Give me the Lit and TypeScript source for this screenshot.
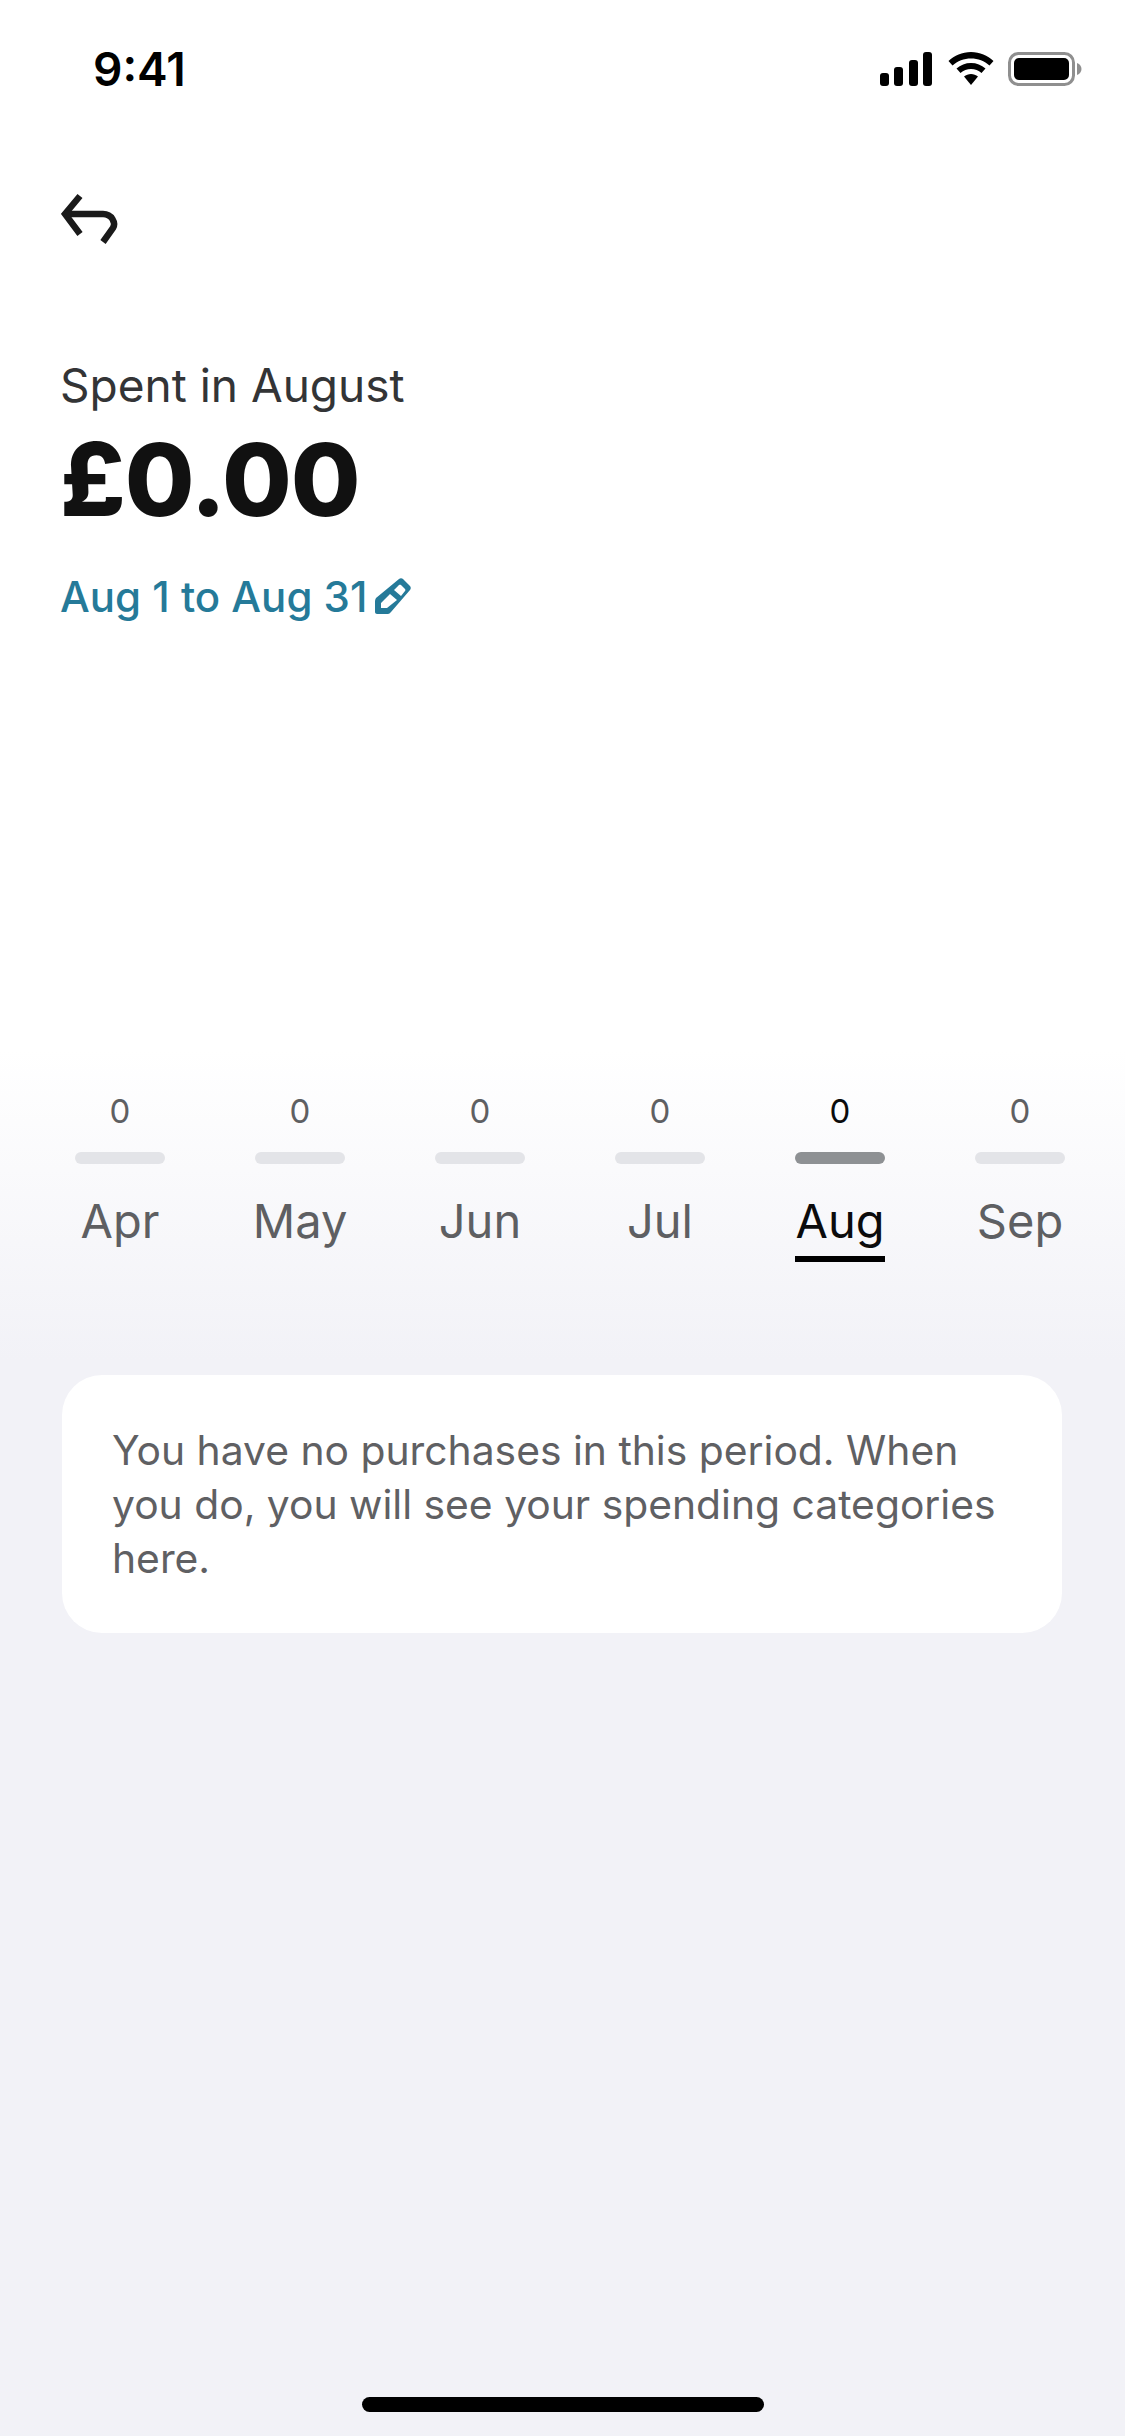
import { LitElement, html, css } from "lit";
import { customElement } from "lit/decorators.js";

const MONTHS = ["Apr", "May", "Jun", "Jul", "Aug", "Sep"];

@customElement("app-root")
export class AppRoot extends LitElement {
  static styles = css`
    :host { display: block; width: 1125px; height: 2436px; font-family: Inter, "Liberation Sans", sans-serif; background: #f2f2f7; overflow: hidden; }
    .page { height: 2436px; display: flex; flex-direction: column; background: linear-gradient(#ffffff 0, #ffffff 1050px, #f2f2f7 1360px); }
    .status { height: 136px; flex: none; display: flex; justify-content: space-between; align-items: flex-start; padding: 43px 43px 0 93px; box-sizing: border-box; }
    .time { font-size: 46px; line-height: 52px; font-weight: 600; color: #000; }
    .sys { display: flex; align-items: center; gap: 14px; padding: 9px 0 0 0; }
    .sys svg { display: block; }
    .nav { height: 88px; flex: none; padding: 57px 0 0 61px; box-sizing: border-box; }
    .nav svg { display: block; }
    .head { padding: 135px 60px 0; flex: none; height: 867px; box-sizing: border-box; }
    .label { font-size: 46px; line-height: 52px; color: #333436; }
    .amount { font-size: 101px; line-height: 124px; font-weight: 800; color: #111; margin-top: 6px; letter-spacing: -1px; }
    .range { display: flex; align-items: center; gap: 8px; font-size: 42px; line-height: 48px; font-weight: 450; color: #257a99; margin-top: 32px; }
    .months { display: grid; grid-template-columns: repeat(6, 180px); padding: 0 30px; flex: none; }
    .m { display: flex; flex-direction: column; align-items: center; color: #5e5f62; }
    .v { font-size: 33px; line-height: 40px; }
    .bar { width: 90px; height: 12px; border-radius: 6px; background: #e3e4e8; margin-top: 21px; }
    .n { font-size: 47px; line-height: 54px; margin-top: 30px; padding-bottom: 8px; width: 90px; text-align: center; white-space: nowrap; display: flex; justify-content: center; border-bottom: 6px solid transparent; }
    .m.on { color: #0b0b0c; }
    .m.on .bar { background: #8e9194; }
    .m.on .n { border-bottom-color: #000; }
    .card { margin: 113px 63px 0 62px; padding: 48px 50px; background: #fff; border-radius: 40px; font-size: 40.8px; line-height: 54px; color: #5f6063; flex: none; }
    .spacer { flex: 1; }
    .home { flex: none; display: flex; justify-content: center; padding-bottom: 24px; }
    .home i { display: block; width: 402px; height: 15px; border-radius: 8px; background: #000; }
  `;

  render() {
    return html`<div class="page">
      <div class="status">
        <div class="time">9:41</div>
        <div class="sys">
          <svg width="54" height="34" viewBox="0 0 54 34"><rect x="0" y="21" width="9" height="13" rx="3"/><rect x="14" y="15" width="9" height="19" rx="3"/><rect x="29" y="8" width="9" height="26" rx="3"/><rect x="43" y="0" width="9" height="34" rx="3"/></svg>
          <svg width="46" height="34" viewBox="0 0 46 34"><path d="M23 0C14 0 6.500 3.500 0.500 9L4.500 13.500C9.500 9 16 6.500 23 6.500S36.500 9 41.500 13.500L45.500 9C39.500 3.500 32 0 23 0Z"/><path d="M23 11C17.500 11 12.500 13 8.500 16.500L12.500 21C15.500 18.500 19 17 23 17S30.500 18.500 33.500 21L37.500 16.500C33.500 13 28.500 11 23 11Z"/><path d="M23 22C20.500 22 18 23 16 24.500L23 33L30 24.500C28 23 25.500 22 23 22Z"/></svg>
          <svg width="74" height="34" viewBox="0 0 74 34"><rect x="1.500" y="1.500" width="64" height="31" rx="9" fill="none" stroke="#8f8f8f" stroke-width="3"/><rect x="6" y="6" width="55" height="22" rx="5"/><path d="M69 11C72 12 73.500 14.500 73.500 17S72 22 69 23Z" fill="#8f8f8f"/></svg>
        </div>
      </div>
      <div class="nav">
        <svg width="60" height="52" viewBox="0 0 60 52" fill="none" stroke="#1a1a1a" stroke-width="6.500"><path d="M19 3L4 21L19 41"/><path d="M4 21H42C51 21 55 30 52 35L42 49"/></svg>
      </div>
      <div class="head">
        <div class="label">Spent in August</div>
        <div class="amount">£0.00</div>
        <div class="range">Aug 1 to Aug 31
          <svg width="36" height="38" viewBox="0 0 36 38"><path fill-rule="evenodd" fill="#257a99" d="M24 1C25 0 27 0 28 1L35 8C36 9 36 11 35 12L16 34C15 35 14 36 13 36H2C1 36 0 35 0 34V23C0 22 .500 21 1 20ZM24 7L19 12L26 18L30 13C30.500 12.500 30.500 11.500 30 11L26 7C25.500 6.500 24.500 6.500 24 7ZM15 16L6 25V30H12L22 22Z"/></svg>
        </div>
      </div>
      <div class="months">
        ${MONTHS.map((m) => html`<div class="m ${m === "Aug" ? "on" : ""}"><div class="v">0</div><div class="bar"></div><div class="n">${m}</div></div>`)}
      </div>
      <div class="card">You have no purchases in this period. When you do, you will see your spending categories here.</div>
      <div class="spacer"></div>
      <div class="home"><i></i></div>
    </div>`;
  }
}
